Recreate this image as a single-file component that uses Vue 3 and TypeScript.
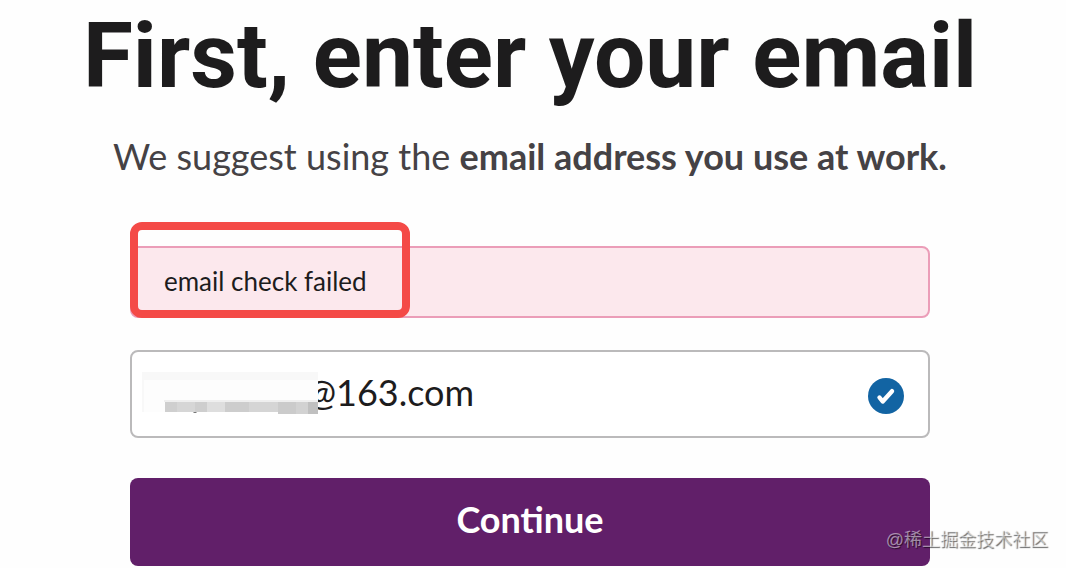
<script setup lang="ts">
import { ref } from 'vue'

const email = ref<string>('@163.com')
const error = ref<string>('email check failed')
</script>

<template>
  <main class="page">
    <h1 class="title">First, enter your email</h1>
    <p class="lead">We suggest using the <strong>email address you use at work.</strong></p>
    <form class="form" @submit.prevent>
      <div class="alert" role="alert">
        {{ error }}
        <span class="marker" aria-hidden="true"></span>
      </div>
      <div class="field">
        <input v-model="email" class="input" type="text" aria-label="Email address" />
        <svg class="mask" viewBox="0 0 176 42" aria-hidden="true">
          <path fill="#fdfdfd" d="M0 0h176v42h-40v-2H0z" />
          <path fill="#f8f8f8" d="M0 0h176v8H2v32H0z" />
          <path fill="#efefef" d="M22 28h154v2H22z" />
          <path fill="#cfcfcf" d="M23 30h12v10H23z" />
          <path fill="#d6d6d6" d="M35 30h18v10H35z" />
          <path fill="#cecece" d="M53 30h12v10H53z" />
          <path fill="#dedede" d="M65 30h18v10H65z" />
          <path fill="#cdcdcd" d="M83 30h24v10H83z" />
          <path fill="#d5d5d5" d="M107 30h29v10h-29z" />
          <path fill="#cbcbcb" d="M136 30h18v12h-18z" />
          <path fill="#d2d2d2" d="M154 30h12v12h-12z" />
          <path fill="#c0c0c0" d="M166 30h10v12h-10z" />
          <path fill="#777" d="M51 40h4l-1 1h-2z" />
        </svg>
        <svg class="check" viewBox="0 0 36 36" aria-hidden="true">
          <circle cx="18" cy="18" r="18" fill="#1264a3" />
          <path d="M11.5 19.5l3.2 4L24 13.2" fill="none" stroke="#fff" stroke-width="4.4" stroke-linecap="round" stroke-linejoin="round" />
        </svg>
      </div>
      <button class="submit" type="submit">Continue</button>
    </form>
    <span class="credit">@稀土掘金技术社区</span>
  </main>
</template>

<style>
body {
  margin: 0;
  background: #fefefe;
}
</style>

<style scoped>
.page {
  position: relative;
  box-sizing: border-box;
  padding: 0 6px 2px 0;
  overflow: hidden;
  font-family: Lato, "Noto Sans", sans-serif;
  color: #1d1c1d;
}
.title {
  margin: 0;
  font-family: Roboto, "Open Sans", sans-serif;
  font-size: 91px;
  font-weight: 700;
  line-height: 112px;
  text-align: center;
  white-space: nowrap;
}
.lead {
  margin: 20px 0 0;
  font-size: 36px;
  line-height: 48px;
  text-align: center;
  color: #454245;
}
.form {
  display: flex;
  flex-direction: column;
  max-width: 800px;
  margin: 66px auto 0;
}
.alert {
  position: relative;
  box-sizing: border-box;
  padding: 17px 32px 19px;
  border: 2px solid #eb9db8;
  border-radius: 8px;
  background: #fce8ed;
  font-size: 26px;
  line-height: 32px;
}
.marker {
  position: absolute;
  top: -26px;
  left: -2px;
  bottom: -2px;
  width: 280px;
  box-sizing: border-box;
  border: 8px solid #f44a47;
  border-radius: 12px;
}
.field {
  position: relative;
  margin-top: 32px;
}
.input {
  display: block;
  box-sizing: border-box;
  width: 100%;
  height: 88px;
  padding: 0 72px 4px 174px;
  border: 2px solid #bbbabb;
  border-radius: 8px;
  background: #fff;
  font: 36px/48px Lato, sans-serif;
  color: #1d1c1d;
  outline: none;
}
.mask {
  position: absolute;
  top: 22px;
  left: 12px;
  width: 176px;
  height: 42px;
}
.check {
  position: absolute;
  top: 28px;
  right: 26px;
  width: 36px;
  height: 36px;
}
.submit {
  margin: 40px 0 0;
  height: 88px;
  padding: 0 0 6px;
  border: 0;
  border-radius: 8px;
  background: #611f69;
  font: 700 36px/48px Lato, sans-serif;
  color: #fff;
}
.credit {
  position: absolute;
  right: 18px;
  bottom: 16px;
  font-family: "Liberation Sans", "Noto Sans CJK SC", sans-serif;
  font-size: 18px;
  line-height: 24px;
  color: rgba(255, 255, 255, 0.5);
  text-shadow: 1px 1px 1px rgba(0, 0, 0, 0.6);
}
</style>
